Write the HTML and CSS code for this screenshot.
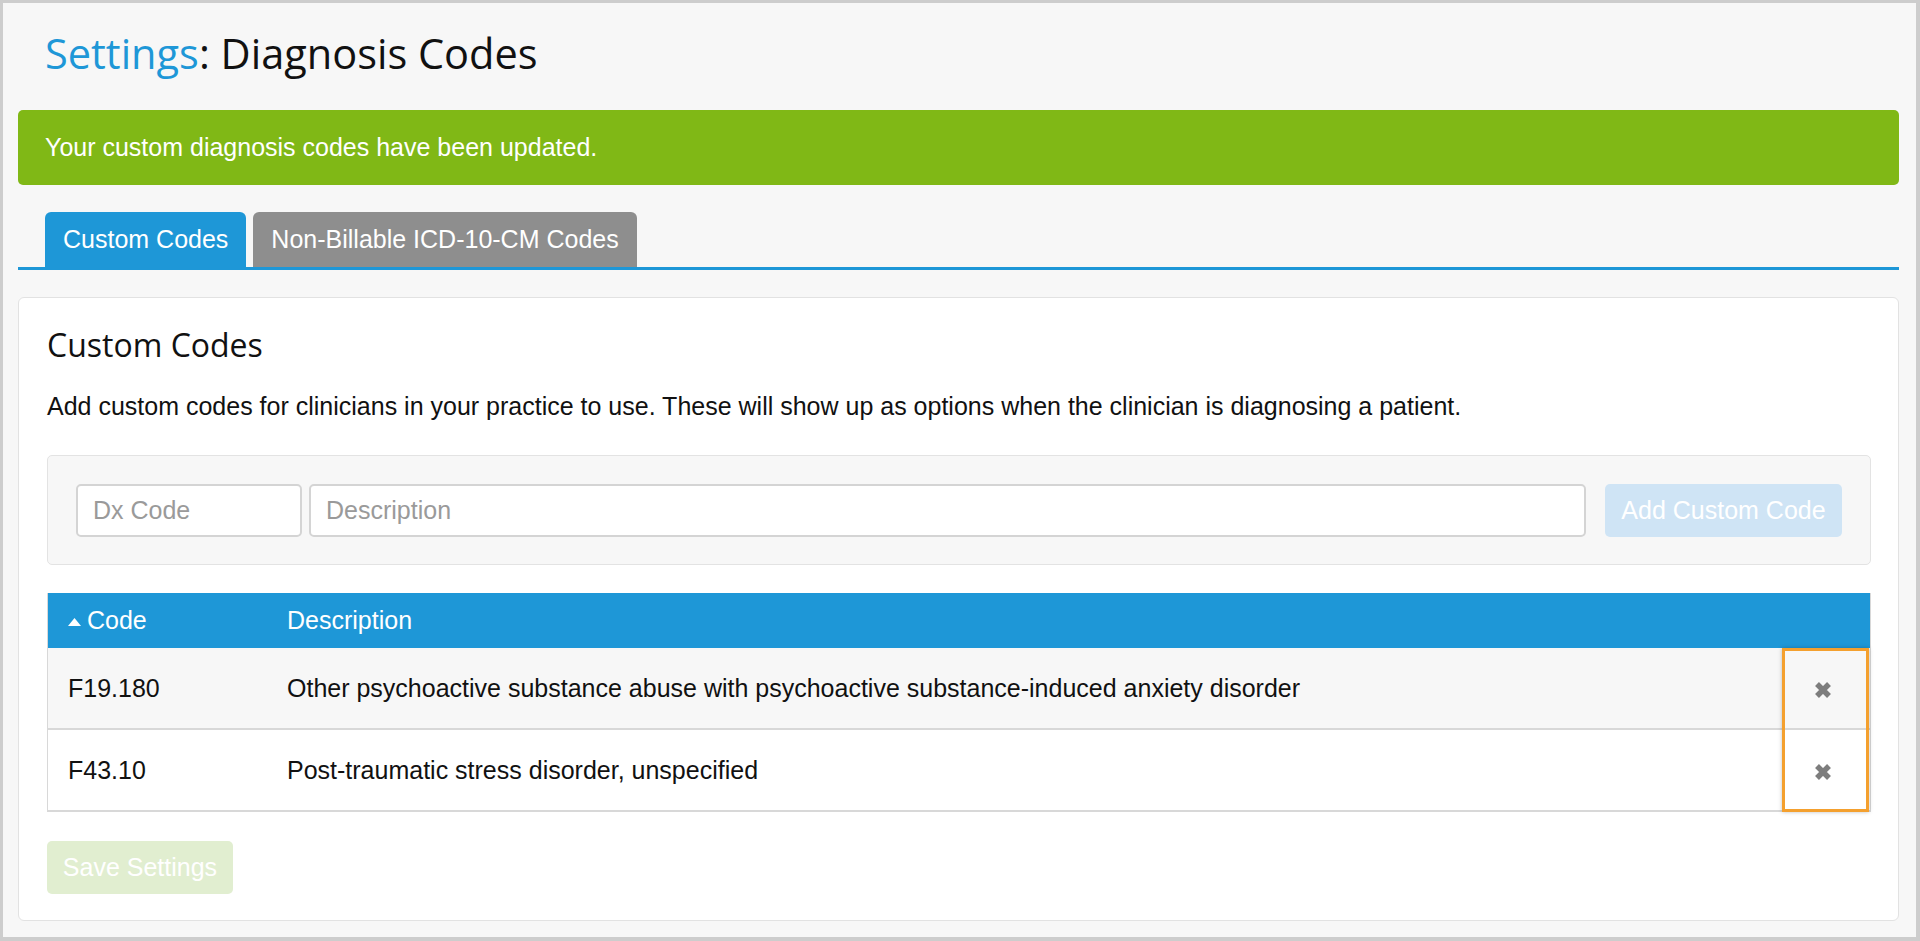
FILE: index.html
```html
<!DOCTYPE html>
<html lang="en">
<head>
  <meta charset="UTF-8" />
  <meta name="viewport" content="width=device-width, initial-scale=1" />
  <title>Settings: Diagnosis Codes</title>
  <link rel="stylesheet" href="styles.css">
</head>
<body>

<div class="page">

  <h1 class="page-title"><span class="crumb">Settings</span>: Diagnosis Codes</h1>

  <div class="alert">Your custom diagnosis codes have been updated.</div>

  <ul class="tabs">
    <li class="tab active">Custom Codes</li>
    <li class="tab">Non-Billable ICD-10-CM Codes</li>
  </ul>

  <div class="panel">
    <h2 class="panel-title">Custom Codes</h2>
    <p class="panel-text">Add custom codes for clinicians in your practice to use. These will show up as options when the clinician is diagnosing a patient.</p>

    <!-- add code form -->
    <div class="well">
      <input type="text" class="field field-code" placeholder="Dx Code" />
      <input type="text" class="field field-desc" placeholder="Description" />
      <button class="btn btn-add" disabled>Add Custom Code</button>
    </div>

    <div class="table-wrap">
      <table class="codes">
        <thead>
          <tr>
            <th class="col-code">
              <svg class="sort" width="13" height="8" viewBox="0 0 13 8"><polygon points="6.5,0 13,8 0,8" fill="#fff"/></svg>Code
            </th>
            <th>Description</th>
            <th class="col-remove"></th>
          </tr>
        </thead>
        <tbody>
          <tr>
            <td class="col-code">F19.180</td>
            <td>Other psychoactive substance abuse with psychoactive substance-induced anxiety disorder</td>
            <td class="col-remove">
              <svg width="20" height="20" viewBox="0 0 20 20"><path d="M4 4L16 16M16 4L4 16" stroke="#7d7d7d" stroke-width="5.5"/></svg>
            </td>
          </tr>
          <tr>
            <td class="col-code">F43.10</td>
            <td>Post-traumatic stress disorder, unspecified</td>
            <td class="col-remove">
              <svg width="20" height="20" viewBox="0 0 20 20"><path d="M4 4L16 16M16 4L4 16" stroke="#7d7d7d" stroke-width="5.5"/></svg>
            </td>
          </tr>
        </tbody>
      </table>
      <!-- highlight box over the remove column -->
      <div class="highlight"></div>
    </div>

    <button class="btn btn-save" disabled>Save Settings</button>
  </div>

</div>

</body>
</html>
```

FILE: styles.css
```css
html, body { margin: 0; padding: 0; }
body { font-family: "Liberation Sans", Arial, sans-serif; color: #111; background: #f7f7f7; }

.page {
  height: 100vh;
  box-sizing: border-box;
  border: 3px solid #cdcdcd;
  border-right-width: 4px;
  border-bottom-width: 4px;
  padding: 0 17px 0 15px;
  background: #f7f7f7;
}

.page-title {
  margin: 0;
  padding: 22px 0 0 27px;
  font-family: "Open Sans", sans-serif;
  font-weight: 400;
  font-size: 41.5px;
  line-height: 57px;
  color: #111;
}
.page-title .crumb { color: #1e97d7; }

.alert {
  margin-top: 28px;
  height: 75px;
  box-sizing: border-box;
  padding: 0 27px;
  display: flex;
  align-items: center;
  background: #80b816;
  border-radius: 5px;
  color: #fff;
  font-size: 25px;
}

.tabs {
  list-style: none;
  margin: 27px 0 0;
  padding: 0 0 0 27px;
  display: flex;
  gap: 7px;
  border-bottom: 3px solid #1e97d7;
}
.tab {
  height: 55px;
  box-sizing: border-box;
  padding: 0 18px;
  display: flex;
  align-items: center;
  background: #8e8e8e;
  color: #fff;
  font-size: 25px;
  border-radius: 6px 6px 0 0;
}
.tab.active { background: #1e97d7; }

.panel {
  margin-top: 27px;
  background: #fff;
  border: 1px solid #e2e2e2;
  border-radius: 6px;
  padding: 26px 27px 26px 28px;
}
.panel-title {
  margin: 0;
  font-family: "Open Sans", sans-serif;
  font-weight: 400;
  font-size: 32px;
  line-height: 42px;
}
.panel-text {
  margin: 25px 0 0;
  font-size: 25px;
  line-height: 30px;
}

.well {
  margin-top: 34px;
  display: flex;
  align-items: center;
  padding: 28px 28px 27px;
  background: #f7f7f7;
  border: 1px solid #e3e3e3;
  border-radius: 5px;
}
.field {
  height: 53px;
  box-sizing: border-box;
  padding: 0 15px;
  border: 2px solid #d4d4d4;
  border-radius: 5px;
  background: #fff;
  font-family: inherit;
  font-size: 25px;
  color: #333;
}
.field::placeholder { color: #9a9a9a; }
.field-code { width: 226px; }
.field-desc { flex: 1; margin-left: 7px; }

.btn {
  height: 53px;
  box-sizing: border-box;
  padding: 0 15px;
  border: none;
  border-radius: 5px;
  color: #fff;
  font-family: inherit;
  font-size: 25px;
  white-space: nowrap;
}
.btn-add { margin-left: 19px; width: 237px; background: #cfe4f5; }
.btn-save { margin-top: 29px; width: 186px; background: #e1eed0; }

.table-wrap { position: relative; margin-top: 28px; }
.codes {
  width: 100%;
  border-collapse: collapse;
  font-size: 25px;
  border-left: 1px solid #d8d8d8;
  border-right: 1px solid #d8d8d8;
}
.codes th {
  height: 55px;
  padding: 0 0 0 20px;
  background: #1e97d7;
  color: #fff;
  font-weight: 400;
  text-align: left;
}
.codes td {
  height: 80px;
  padding: 0 0 0 20px;
  border-bottom: 2px solid #d8d8d8;
}
.codes tbody tr:nth-child(odd) td { background: #f7f7f7; }
.codes .col-code { width: 199px; }
.codes .col-remove { width: 87px; padding: 0 4px 0 0; text-align: center; }
.col-remove svg { display: inline-block; vertical-align: middle; }
.sort { margin-right: 6px; vertical-align: 3px; }

.highlight {
  position: absolute;
  top: 55px;
  right: 2px;
  width: 87px;
  height: 164px;
  box-sizing: border-box;
  border: 3px solid #f4a02e;
  box-shadow: 0 0 4px rgba(0, 0, 0, 0.25);
  pointer-events: none;
}
```
